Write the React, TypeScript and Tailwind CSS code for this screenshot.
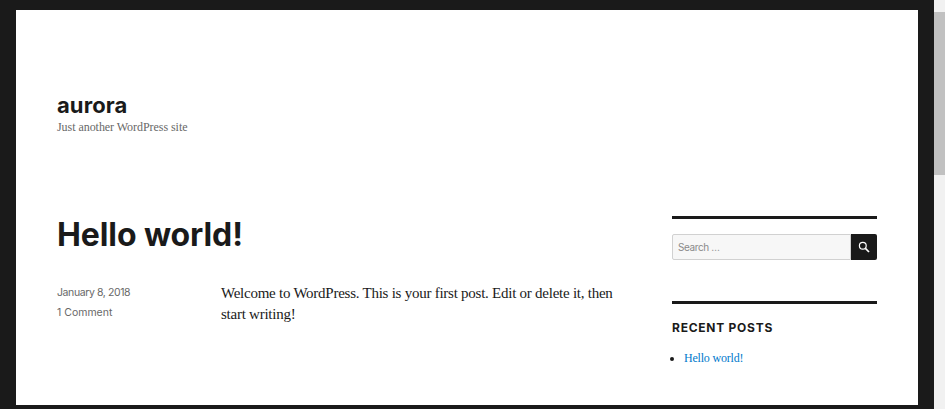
const serif = "font-['Liberation_Serif','DejaVu_Serif',serif]";
const sans = "font-['Inter','Liberation_Sans',sans-serif]";

const App = () => {
  return (
    <div className="flex h-[409px] w-[945px] overflow-hidden bg-[#1a1a1a]">
      <div className="h-full w-[934px] px-4 pt-2.5">
        <div className="h-[395px] w-[902px] overflow-hidden bg-white">
          <header className="px-[41px] pt-[81px]">
            <h1 className={`${sans} text-[22px] leading-[28px] font-bold tracking-[0.1px] text-[#1a1a1a]`}>aurora</h1>
            <p className={`${serif} mt-[-2px] text-[12px] leading-[20px] tracking-[-0.05px] text-[#686868]`}>Just another WordPress site</p>
          </header>
          <div className="mt-[78px] flex justify-between pr-[41px] pl-[41px]">
            <main className="w-[574px]">
              <h2 className={`${sans} text-[32px] leading-[40px] font-bold tracking-[-0.1px] text-[#1a1a1a]`}>Hello world!</h2>
              <div className="mt-[28px] flex">
                <div className={`${sans} w-[164px] text-[10.5px] text-[#686868]`}>
                  <p className="leading-[20px] tracking-[-0.4px]">January 8, 2018</p>
                  <p className="leading-[20px]">1 Comment</p>
                </div>
                <p className={`${serif} flex-1 text-[15px] leading-[20.5px] tracking-[-0.25px] text-[#1a1a1a]`}>
                  Welcome to WordPress. This is your first post. Edit or delete it, then start writing!
                </p>
              </div>
            </main>
            <aside className="mt-px w-[205px]">
              <div className="border-t-[3px] border-[#1a1a1a] pt-[15px]">
                <div className="flex h-[26px]">
                  <div className={`${sans} flex flex-1 items-center rounded-l-[2px] border border-[#d1d1d1] bg-[#f7f7f7] px-[5px] text-[10px] tracking-[-0.4px] text-[#8a8a8a]`}>
                    Search …
                  </div>
                  <div className="flex w-[26px] items-center justify-center rounded-r-[2px] bg-[#1a1a1a]">
                    <svg width="12" height="12" viewBox="0 0 12 12" fill="none" stroke="#ffffff">
                      <circle cx="4.8" cy="4.8" r="3.4" strokeWidth="1.2" />
                      <path d="M7.4 7.4 L11 11" strokeWidth="1.7" />
                    </svg>
                  </div>
                </div>
              </div>
              <div className="mt-[41px] border-t-[3px] border-[#1a1a1a] pt-[14px]">
                <h3 className={`${sans} text-[12px] leading-[20px] font-bold tracking-[0.75px] text-[#1a1a1a]`}>RECENT POSTS</h3>
                <ul className={`${serif} mt-[10px] list-disc pl-3 text-[12px] leading-[20px] tracking-[-0.2px] text-[#1a1a1a]`}>
                  <li className="text-[#007acc] marker:text-[#1a1a1a]">Hello world!</li>
                </ul>
              </div>
            </aside>
          </div>
        </div>
      </div>
      <div className="h-full w-[11px] bg-[#f1f1f1] pt-[12px]">
        <div className="h-[163px] w-full bg-[#c1c1c1]" />
      </div>
    </div>
  );
};

export default App;
